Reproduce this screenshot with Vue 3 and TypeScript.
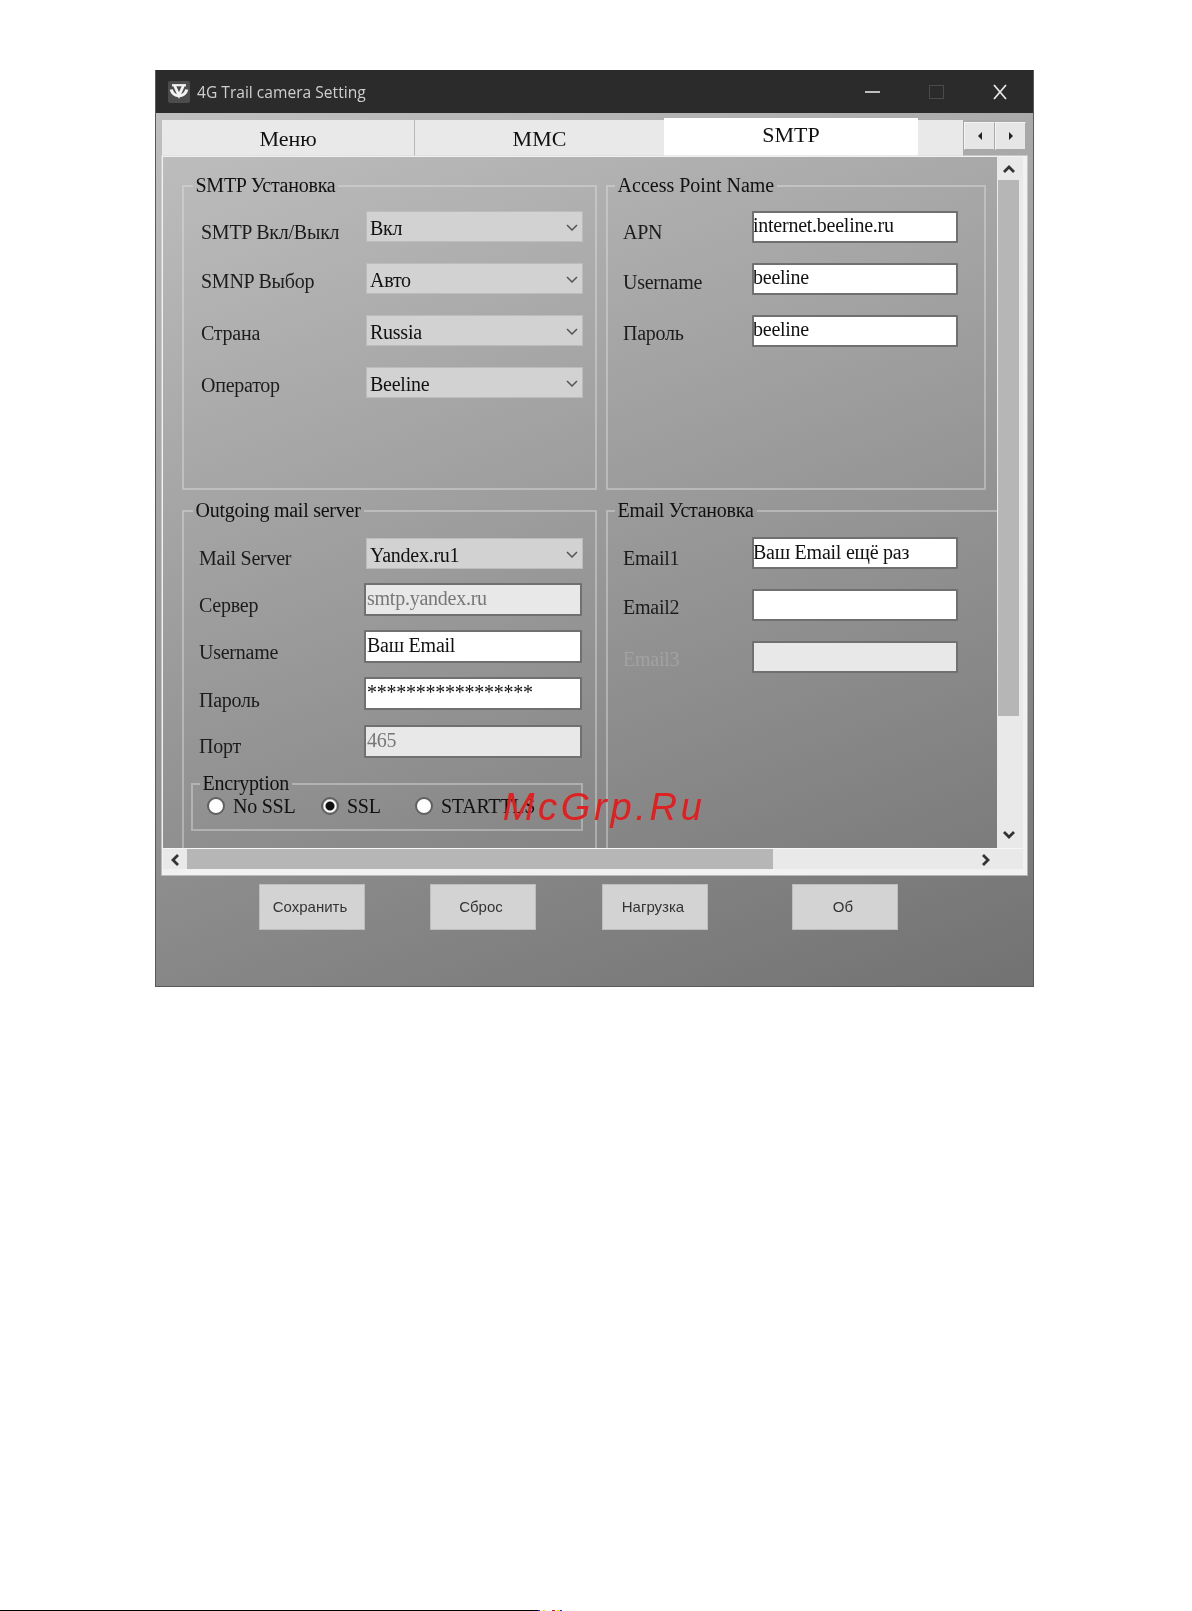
<script setup lang="ts">
type Row = { label: string; kind: 'select' | 'input' | 'off'; value: string; top: number; dim?: boolean }

const smtpRows: Row[] = [
  { label: 'SMTP Вкл/Выкл', kind: 'select', value: 'Вкл', top: 10 },
  { label: 'SMNP Выбор', kind: 'select', value: 'Авто', top: 7 },
  { label: 'Страна', kind: 'select', value: 'Russia', top: 7 },
  { label: 'Оператор', kind: 'select', value: 'Beeline', top: 7 },
]
const apnRows: Row[] = [
  { label: 'APN', kind: 'input', value: 'internet.beeline.ru', top: 10 },
  { label: 'Username', kind: 'input', value: 'beeline', top: 8 },
  { label: 'Пароль', kind: 'input', value: 'beeline', top: 7 },
]
const mailRows: Row[] = [
  { label: 'Mail Server', kind: 'select', value: 'Yandex.ru1', top: 9 },
  { label: 'Сервер', kind: 'off', value: 'smtp.yandex.ru', top: 11 },
  { label: 'Username', kind: 'input', value: 'Ваш Email', top: 11 },
  { label: 'Пароль', kind: 'input', value: '*****************', top: 12 },
  { label: 'Порт', kind: 'off', value: '465', top: 10 },
]
const emailRows: Row[] = [
  { label: 'Email1', kind: 'input', value: 'Ваш Email ещё раз', top: 10 },
  { label: 'Email2', kind: 'input', value: '', top: 7 },
  { label: 'Email3', kind: 'off', value: '', top: 7, dim: true },
]
const groups = [
  { title: 'SMTP Установка', cls: 'g-smtp', rows: smtpRows },
  { title: 'Access Point Name', cls: 'g-apn', rows: apnRows },
  { title: 'Outgoing mail server', cls: 'g-mail', rows: mailRows },
  { title: 'Email Установка', cls: 'g-email', rows: emailRows },
]
const radios = [
  { label: 'No SSL', on: false },
  { label: 'SSL', on: true },
  { label: 'STARTTLS', on: false },
]
const buttons = ['Сохранить', 'Сброс', 'Нагрузка', 'Об']
const tabs = ['Меню', 'MMC']
const specks = ['#2030e0', '#ffffff', '#f4e010', '#ffffff', '#ffffff', '#ffffff', '#e01020', '#ffffff', '#f4e010', '#2030e0']
</script>

<template>
  <div class="page">
    <div class="window">
      <header class="titlebar">
        <svg class="logo" viewBox="0 0 22 22" width="22" height="22">
          <rect width="22" height="22" rx="2" fill="#4c4c4c" />
          <path d="M3.2 8.5A8 8 0 0 0 18.8 8.5" stroke="#f2f2f2" stroke-width="3.2" fill="none" />
          <path d="M4 4.2H18" stroke="#f2f2f2" stroke-width="2.2" fill="none" />
          <path d="M6.5 4.5L11 14.5L15.5 4.5" stroke="#f2f2f2" stroke-width="2.8" fill="none" />
        </svg>
        <span class="title">4G Trail camera Setting</span>
        <span class="spacer"></span>
        <span class="minimize"></span>
        <span class="maximize"></span>
        <svg class="close" viewBox="0 0 14 16" width="14" height="16">
          <path d="M1 1l12 14M13 1L1 15" stroke="#e6e6e6" stroke-width="1.8" fill="none" />
        </svg>
      </header>

      <div class="tabstrip">
        <div v-for="t in tabs" :key="t" class="tab">{{ t }}</div>
        <div class="tab active">SMTP</div>
        <div class="tab filler"></div>
        <div class="tabnav">
          <button class="navbtn" type="button"><svg viewBox="0 0 6 10" width="6" height="10"><path d="M5 1v8L1 5z" fill="#222" /></svg></button>
          <button class="navbtn" type="button"><svg viewBox="0 0 6 10" width="6" height="10"><path d="M1 1v8l4-4z" fill="#222" /></svg></button>
        </div>
      </div>

      <section class="panel">
        <div class="viewport">
          <fieldset v-for="g in groups" :key="g.title" class="group" :class="g.cls">
            <legend>{{ g.title }}</legend>
            <div class="rows">
              <div v-for="r in g.rows" :key="r.label" class="row">
                <span class="label" :class="{ dim: r.dim }" :style="{ marginTop: r.top + 'px' }">{{ r.label }}</span>
                <div v-if="r.kind === 'select'" class="select">
                  <span>{{ r.value }}</span>
                  <svg viewBox="0 0 12 7" width="12" height="7"><path d="M1 1l5 5 5-5" stroke="#555" stroke-width="1.5" fill="none" /></svg>
                </div>
                <div v-else class="input" :class="{ off: r.kind === 'off' }">{{ r.value }}</div>
              </div>
            </div>
            <fieldset v-if="g.cls === 'g-mail'" class="encryption">
              <legend>Encryption</legend>
              <div class="radios">
                <label v-for="o in radios" :key="o.label" class="radio">
                  <span class="dot" :class="{ on: o.on }"></span>
                  <span>{{ o.label }}</span>
                </label>
              </div>
            </fieldset>
          </fieldset>
        </div>
        <div class="vscroll">
          <svg class="arrow" viewBox="0 0 12 8" width="12" height="8"><path d="M1 7l5-5 5 5" stroke="#333" stroke-width="2.8" fill="none" /></svg>
          <div class="vthumb"></div>
          <svg class="arrow low" viewBox="0 0 12 8" width="12" height="8"><path d="M1 1l5 5 5-5" stroke="#333" stroke-width="2.8" fill="none" /></svg>
        </div>
        <div class="hscroll">
          <svg class="harrow" viewBox="0 0 8 12" width="8" height="12"><path d="M7 1L2 6l5 5" stroke="#333" stroke-width="2.8" fill="none" /></svg>
          <div class="hthumb"></div>
          <svg class="harrow right" viewBox="0 0 8 12" width="8" height="12"><path d="M1 1l5 5-5 5" stroke="#333" stroke-width="2.8" fill="none" /></svg>
        </div>
      </section>

      <div class="actions">
        <button v-for="b in buttons" :key="b" class="action" type="button">{{ b }}</button>
      </div>
    </div>

    <div class="watermark">McGrp.Ru</div>

    <div class="footline">
      <span class="rule"></span>
      <span v-for="(c, i) in specks" :key="i" class="speck" :style="{ background: c }"></span>
    </div>
  </div>
</template>

<style scoped>
.page {
  position: relative;
  height: 1611px;
  display: flex;
  flex-direction: column;
  overflow: hidden;
  background: #fff;
  font-family: "Liberation Serif", serif;
  color: #111;
}
.window {
  box-sizing: border-box;
  width: 879px;
  height: 917px;
  margin: 70px 0 0 155px;
  display: flex;
  flex-direction: column;
  background: linear-gradient(160deg, #c2c2c2 0%, #a2a2a2 40%, #727272 100%);
  border: 1px solid #5a5a5a;
  border-top: none;
  filter: blur(0.75px);
}
.titlebar {
  height: 43px;
  flex: none;
  display: flex;
  align-items: center;
  padding: 0 26px 0 12px;
  background: #2b2b2b;
  color: #cfcfcf;
}
.logo { flex: none; }
.title {
  margin-left: 7px;
  font: 15.6px "Open Sans", sans-serif;
}
.spacer { flex: 1; }
.minimize { width: 15px; height: 2px; background: #bdbdbd; }
.maximize {
  box-sizing: border-box;
  width: 15px;
  height: 14px;
  margin: 0 49px;
  border: 1px solid #4a4a4a;
}
.close { flex: none; }

.tabstrip {
  height: 38px;
  flex: none;
  margin-top: 5px;
  padding-left: 6px;
  display: flex;
  align-items: flex-end;
}
.tab {
  box-sizing: border-box;
  width: 252px;
  height: 36px;
  padding-top: 4px;
  margin-right: 1px;
  text-align: center;
  font-size: 22px;
  line-height: 30px;
  background: #e9e9e9;
}
.tab:nth-child(2) { width: 249px; margin-right: 0; }
.tab.active {
  width: 254px;
  height: 38px;
  padding-top: 0;
  margin-right: 0;
  line-height: 34px;
  background: #fff;
}
.tab.filler { width: 45px; margin-right: 0; }
.tabnav {
  align-self: flex-start;
  margin-top: 3px;
  display: flex;
  border: 1px solid #a8a8a8;
}
.navbtn {
  width: 31px;
  height: 28px;
  padding: 0;
  display: flex;
  align-items: center;
  justify-content: center;
  background: #e6e6e6;
  border: 1px solid #f4f4f4;
  border-right-color: #aaa;
  border-bottom-color: #aaa;
}

.panel {
  box-sizing: border-box;
  width: 865px;
  height: 719px;
  flex: none;
  margin-left: 6px;
  display: grid;
  grid-template-columns: 834px 1fr;
  grid-template-rows: 691px 1fr;
  border: solid #f1f1f1;
  border-width: 1px 4px 6px 1px;
  outline: 1px solid rgba(220, 220, 220, 0.6);
}
.viewport {
  overflow: hidden;
  display: grid;
  grid-template-columns: 415px 380px;
  grid-template-rows: 315px auto;
  column-gap: 9px;
  row-gap: 10px;
  align-content: start;
  padding: 18px 0 0 19px;
  box-sizing: border-box;
  min-width: 0;
  min-height: 0;
}
.group {
  box-sizing: border-box;
  min-width: 0;
  margin: 0;
  padding: 14px 0 0 15px;
  border: 2px solid rgba(226, 226, 226, 0.42);
  font-size: 20px;
  line-height: 22px;
  letter-spacing: -0.25px;
}
legend {
  margin-left: -8.4px;
  padding: 0 3px;
  height: 22px;
  line-height: 20px;
  font-size: 20px;
}
.g-mail > legend { margin-left: -6.4px; }
.g-smtp legend { margin-left: -8.5px; }
.g-apn legend { letter-spacing: 0; }
.g-mail, .g-email { height: 360px; }
.g-email { width: 420px; padding-top: 15px; }
.rows { display: flex; flex-direction: column; gap: 20px; }
.row { display: flex; align-items: flex-start; min-height: 32px; }
.label { flex: none; width: 165px; white-space: nowrap; color: #1c1c1c; }
.label.dim { color: #a2a2a2; }
.g-smtp { padding-left: 17px; }
.g-apn .label, .g-email .label { width: 129px; }
.g-mail .rows { gap: 14px; }
.g-mail .row { min-height: 0; }
.g-mail { padding-top: 16px; }
.select {
  box-sizing: border-box;
  width: 217px;
  height: 31px;
  padding: 5px 4px 0 3px;
  display: flex;
  justify-content: space-between;
  background: #d2d2d2;
  border: 1px solid #bcbcbc;
  color: #111;
}
.select svg { margin: 7px 0 0; }
.g-mail .select { margin-left: 2px; }
.input {
  box-sizing: border-box;
  width: 206px;
  height: 32px;
  padding: 2px 0 0 0;
  text-indent: -1px;
  background: #fff;
  border: 2px solid #707070;
  border-radius: 1px;
  color: #111;
  white-space: nowrap;
  overflow: hidden;
}
.g-apn .input { padding-top: 1px; }
.g-mail .input { width: 218px; height: 33px; text-indent: 1px; }
.input.off { background: #e8e8e8; color: #777; }

.encryption {
  box-sizing: border-box;
  width: 392px;
  height: 58px;
  min-width: 0;
  margin: 15px 0 0 -8px;
  padding: 0 0 0 14px;
  border: 2px solid rgba(226, 226, 226, 0.42);
}
.encryption legend { margin-left: -7.4px; }
.radios {
  display: grid;
  grid-template-columns: 114px 94px auto;
}
.radio { display: flex; align-items: center; gap: 8px; }
.dot {
  box-sizing: border-box;
  width: 18px;
  height: 18px;
  border-radius: 50%;
  background: #fff;
  border: 2px solid #606060;
}
.dot.on {
  background: radial-gradient(circle, #111 0 4px, #fff 5px 6px, #cfcfcf 6.5px);
}

.vscroll {
  position: relative;
  display: flex;
  flex-direction: column;
  align-items: center;
  background: #e9e9e9;
  padding: 0 4px 0 1px;
  box-sizing: border-box;
}
.arrow { margin-top: 8px; flex: none; }
.arrow.low { margin-top: auto; margin-bottom: 9px; }
.vthumb {
  width: 100%;
  height: 536px;
  margin-top: 7px;
  background: #b6b6b6;
}
.hscroll {
  grid-column: 1 / 3;
  display: flex;
  align-items: center;
  background: #e9e9e9;
  border-top: 1px solid #f6f6f6;
  padding-left: 24px;
  position: relative;
}
.harrow { position: absolute; left: 8px; top: 5px; }
.harrow.right { left: 819px; }
.hthumb { width: 586px; height: 100%; background: #b6b6b6; }

.actions {
  display: flex;
  gap: 65px;
  padding: 9px 0 0 103px;
}
.action {
  box-sizing: border-box;
  width: 106px;
  height: 46px;
  padding: 0 4px 1px 0;
  background: #d3d3d3;
  border: 1px solid #bdbdbd;
  color: #333;
  font: 15px "Liberation Sans", sans-serif;
}
.action:nth-child(3) { margin-left: 1px; }
.action:nth-child(4) { margin-left: 19px; }

.watermark {
  position: absolute;
  left: 503px;
  top: 784px;
  font: italic 38px/46px "Liberation Sans", sans-serif;
  letter-spacing: 3.7px;
  color: #dc2222;
}
.footline {
  margin-top: auto;
  height: 1px;
  display: flex;
  flex: none;
}
.rule { width: 538px; background: #000; }
.speck { width: 2.4px; height: 1px; }
</style>
